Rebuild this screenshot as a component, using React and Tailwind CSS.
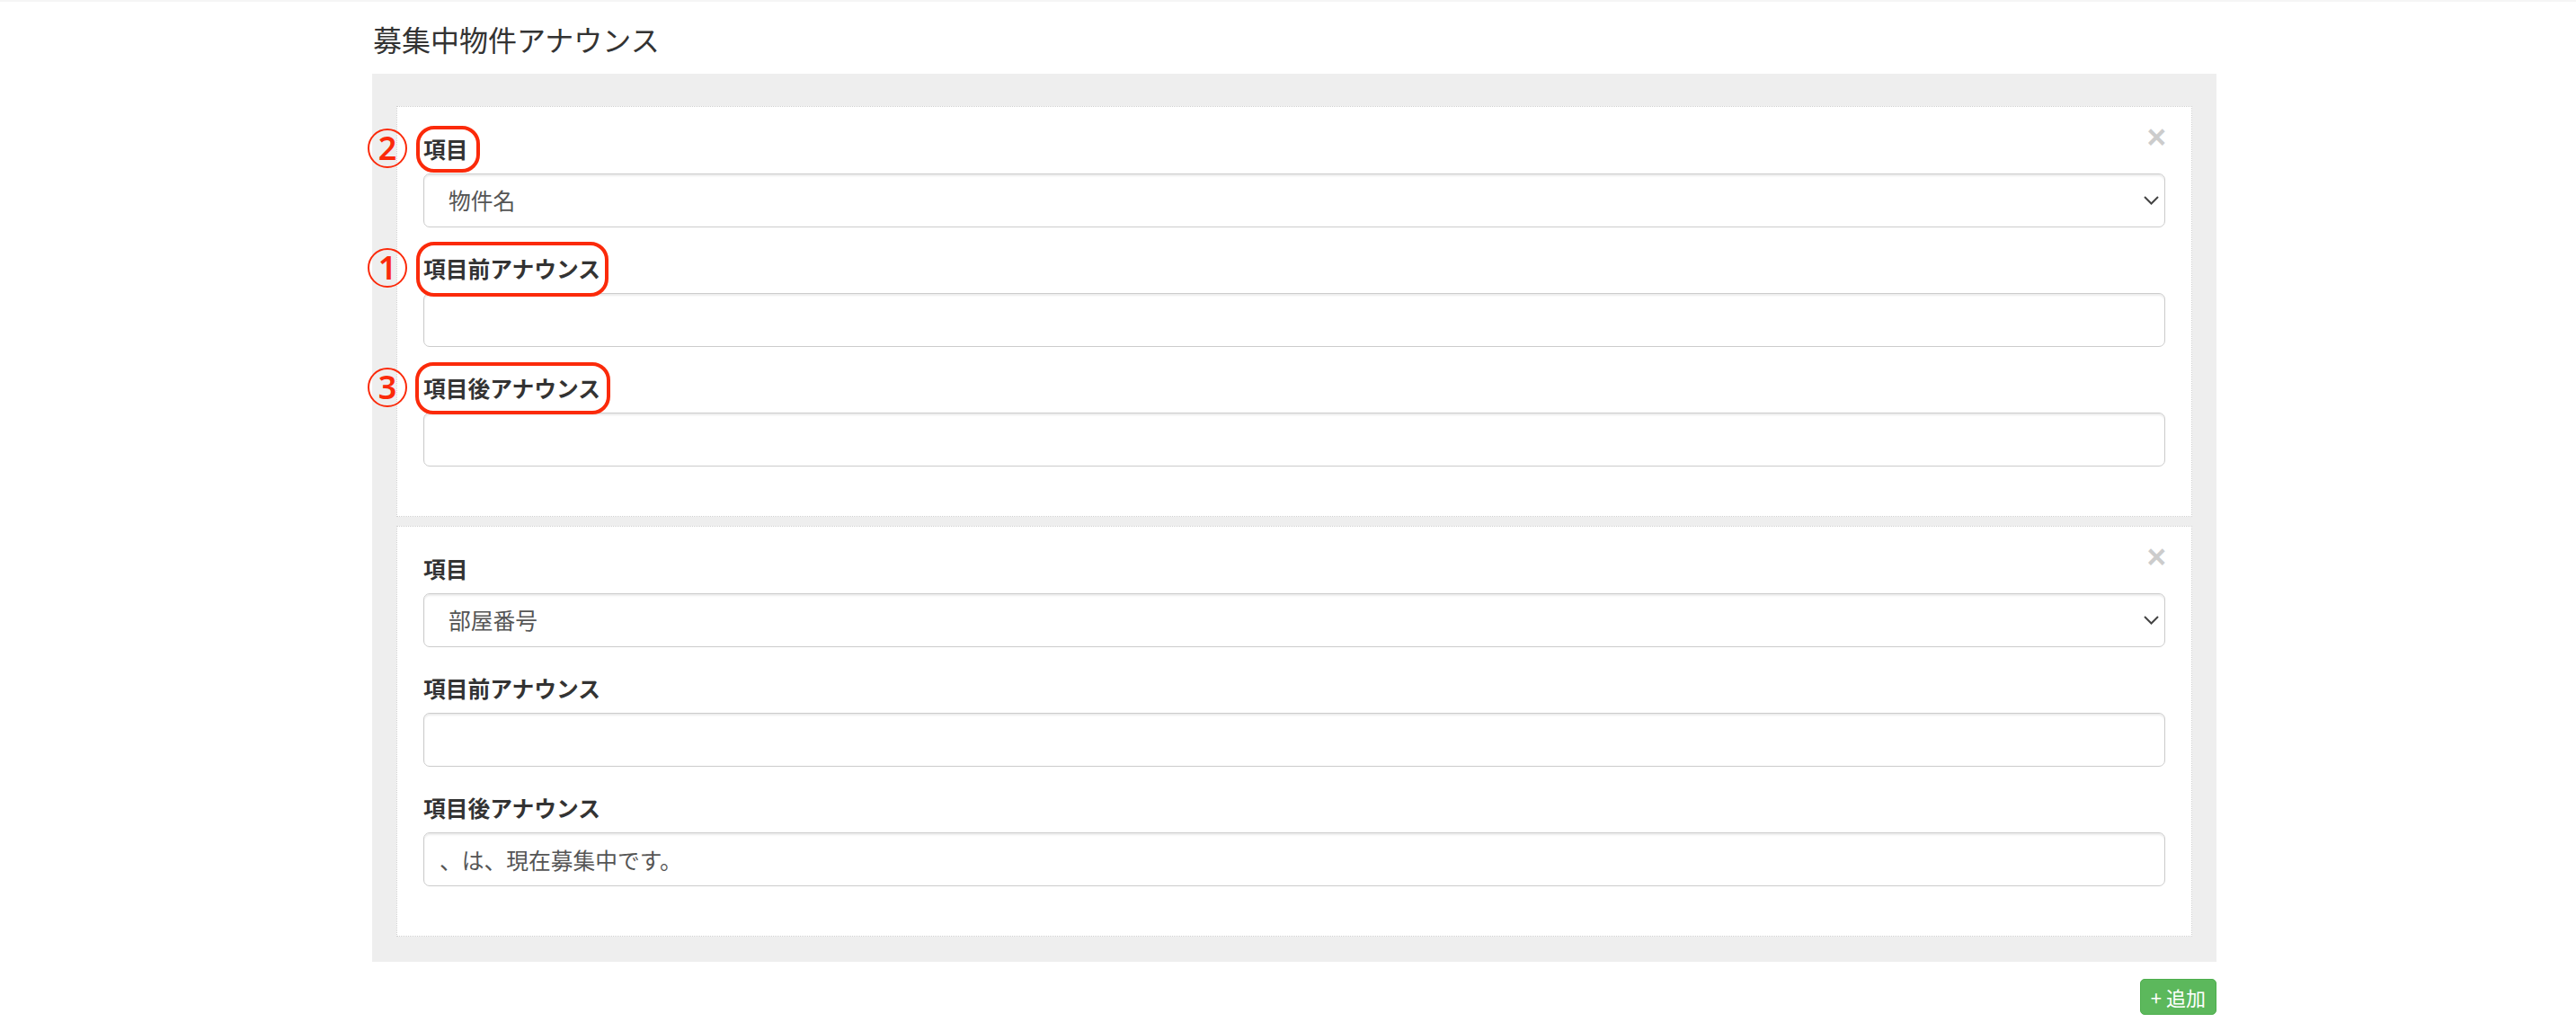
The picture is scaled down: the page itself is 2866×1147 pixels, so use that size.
import React from 'react';

const FONT = { fontFamily: "'Noto Sans CJK JP', 'Noto Sans', sans-serif" };

// announcement rows; the first one carries the red numbered callouts
const rows = [
    {
        field: '物件名',
        before: '',
        after: '',
        callouts: {
            field: { num: '2', box: 'left-[-8px] top-[-7px] w-[71px] h-[52px]' },
            before: { num: '1', box: 'left-[-8px] top-[-11px] w-[214px] h-[61px]' },
            after: { num: '3', box: 'left-[-9px] top-[-10px] w-[217px] h-[58px]' },
        },
    },
    { field: '部屋番号', before: '', after: '、は、現在募集中です。' },
];

const Callout = ({ num, box }) => (
    <>
        <span className="absolute left-[-62px] top-[-4px] w-[44px] h-[44px] rounded-full border-[2.5px] border-[#fb2a0a] flex items-center justify-center text-[36px] leading-none font-semibold text-[#fb2a0a]" style={{ fontFamily: "'Noto Sans', sans-serif" }}>
            {num}
        </span>
        <span className={`absolute ${box} rounded-[20px] border-[4px] border-[#fb2a0a] pointer-events-none`} />
    </>
);

const Label = ({ children, callout }) => (
    <div className="flex mb-[10px]">
        <label className="relative inline-block text-[24.75px] leading-[36px] font-bold text-[#333]">
            {children}
            {callout && <Callout {...callout} />}
        </label>
    </div>
);

const controlClass =
    'w-full h-[60px] bg-white border border-[#cccccc] rounded-[7px] text-[24.75px] text-[#555] shadow-[inset_0_2px_2px_rgba(0,0,0,0.075)] outline-none';

const Chevron = () => (
    <svg className="absolute right-[7px] top-1/2 -translate-y-1/2 pointer-events-none" width="17" height="10" viewBox="0 0 17 10">
        <polyline points="1,1 8.5,8.5 16,1" fill="none" stroke="#444" strokeWidth="2" />
    </svg>
);

const AnnounceCard = ({ row }) => {
    const c = row.callouts || {};
    return (
        <div className="relative bg-white border border-dotted border-[#cfcfcf] px-[29px] pt-[28px] pb-[28px]">
            <button className="absolute right-[28px] top-[15px] text-[37px] leading-none font-bold text-[#cccccc]" style={{ fontFamily: "'Liberation Sans', Arial, sans-serif" }}>
                ×
            </button>

            <div className="mb-[27px]">
                <Label callout={c.field}>項目</Label>
                <div className="relative">
                    <select defaultValue={row.field} className={`${controlClass} appearance-none pl-[27px]`} style={FONT}>
                        <option>物件名</option>
                        <option>部屋番号</option>
                    </select>
                    <Chevron />
                </div>
            </div>

            <div className="mb-[27px]">
                <Label callout={c.before}>項目前アナウンス</Label>
                <input type="text" defaultValue={row.before} className={`${controlClass} px-[17px]`} style={FONT} />
            </div>

            <div className="mb-[27px]">
                <Label callout={c.after}>項目後アナウンス</Label>
                <input type="text" defaultValue={row.after} className={`${controlClass} px-[17px]`} style={FONT} />
            </div>
        </div>
    );
};

export default function App() {
    return (
        <div className="min-h-screen bg-white" style={FONT}>
            <div className="h-[2px] bg-[#f5f5f5]" />
            <div className="ml-[414px] w-[2052px]">
                <h3 className="mt-[24px] mb-[21px] pl-[1px] text-[32px] leading-[35px] font-normal text-[#333]">
                    募集中物件アナウンス
                </h3>

                <div className="bg-[#eeeeee] px-[27px] pt-[36px] pb-[28px] flex flex-col gap-[10px]">
                    {rows.map((row, i) => (
                        <AnnounceCard key={i} row={row} />
                    ))}
                </div>

                <div className="flex justify-end mt-[19px]">
                    <button className="h-[40px] px-[11px] rounded-[5px] bg-[#5cb85c] border border-[#4cae4c] text-white text-[22px] leading-none">
                        + 追加
                    </button>
                </div>
            </div>
        </div>
    );
}
